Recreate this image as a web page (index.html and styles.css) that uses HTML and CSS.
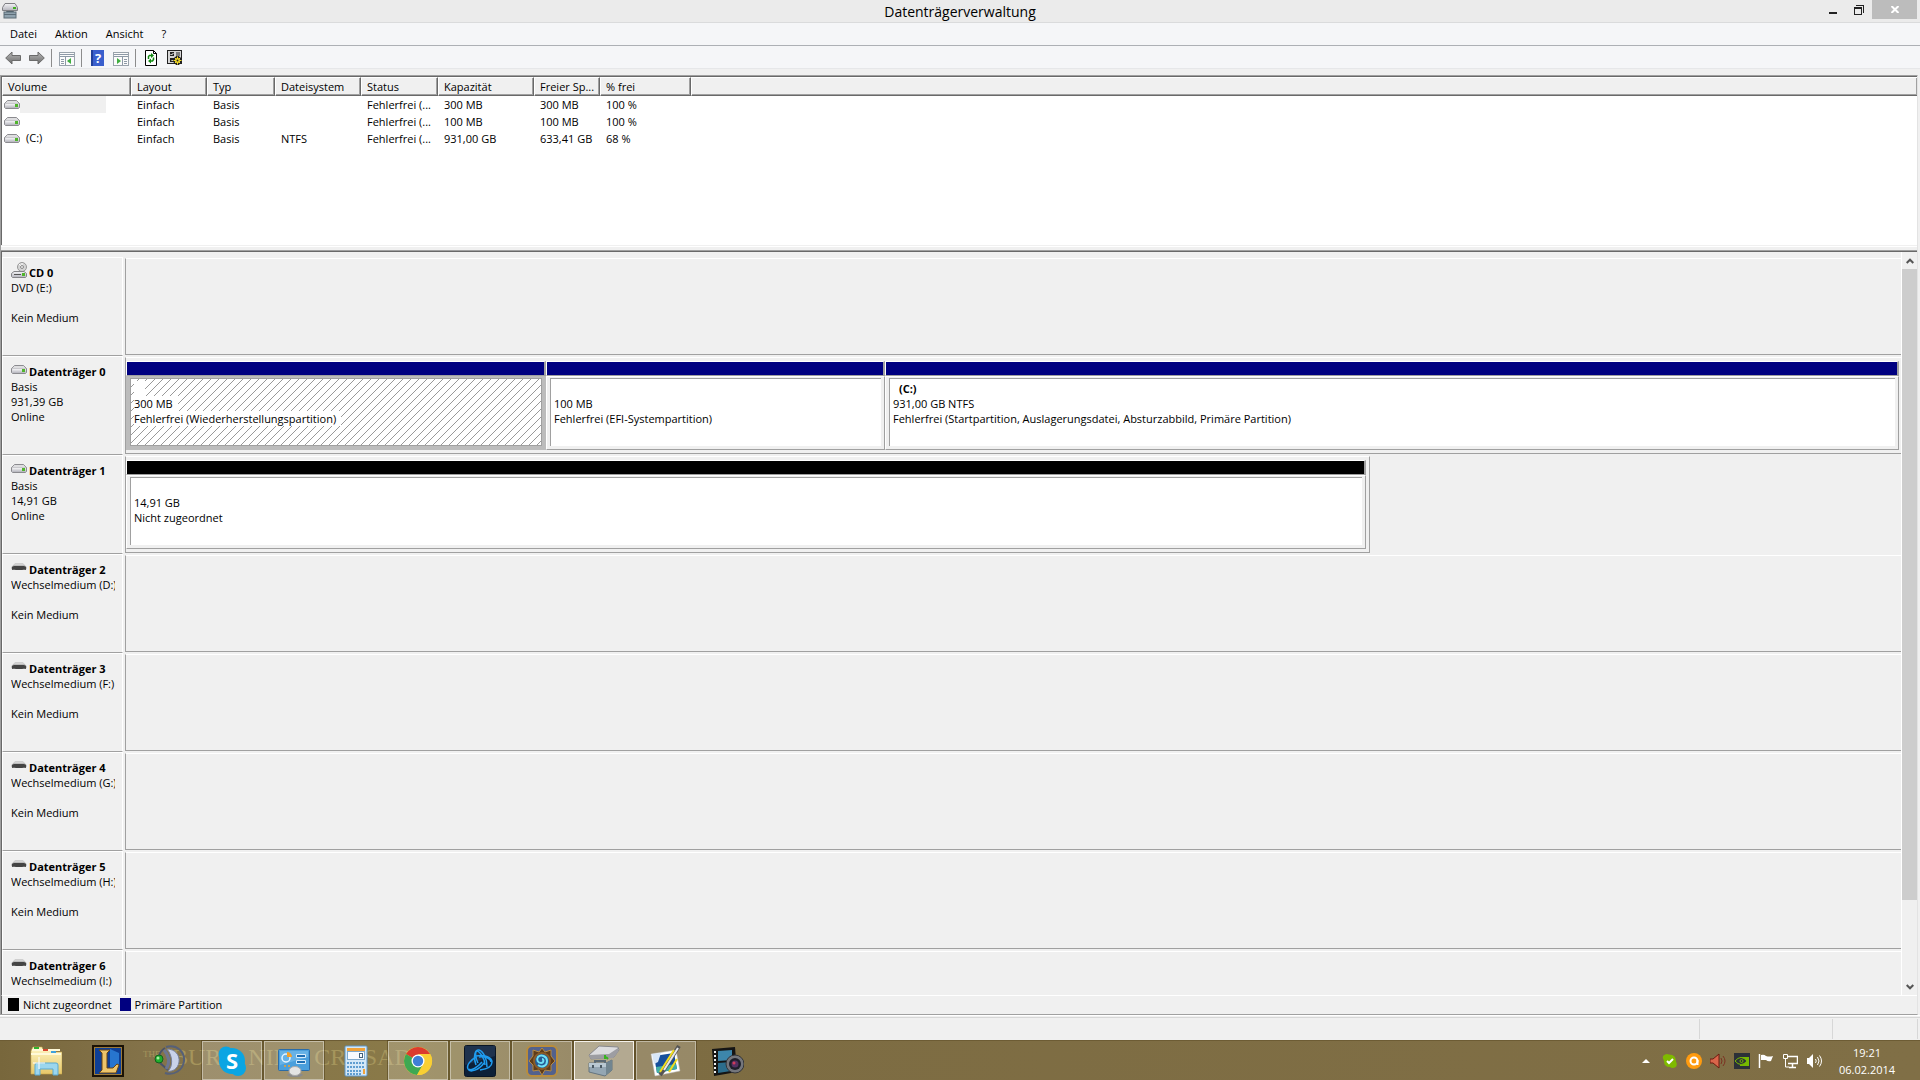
FILE: index.html
```html
<!DOCTYPE html>
<html lang="de">

<head>
    <meta charset="UTF-8">
    <meta name="viewport" content="width=device-width, initial-scale=1.0">
    <title>Datenträgerverwaltung</title>
    <link rel="stylesheet" href="styles.css">
</head>

<body>

    <!-- shared icons -->
    <svg class="defs" aria-hidden="true">
        <defs>
            <linearGradient id="metal" x1="0" y1="0" x2="0" y2="1">
                <stop offset="0" stop-color="#f4f4f6" />
                <stop offset="1" stop-color="#b4b4bc" />
            </linearGradient>
            <linearGradient id="arrow" x1="0" y1="0" x2="0" y2="1">
                <stop offset="0" stop-color="#b8b8b8" />
                <stop offset="1" stop-color="#6c6c6c" />
            </linearGradient>
            <linearGradient id="folder" x1="0" y1="0" x2="0" y2="1">
                <stop offset="0" stop-color="#fff6c4" />
                <stop offset="1" stop-color="#e6c768" />
            </linearGradient>
            <pattern id="hatch" width="8" height="8" patternUnits="userSpaceOnUse">
                <path d="M-1 9L9 -1M-1 1L1 -1M7 9L9 7" stroke="#999" stroke-width="1" fill="none" />
            </pattern>
        </defs>
        <symbol id="drive" viewBox="0 0 16 9">
            <path d="M3.500.5h9l3 3v4l-1 1h-13l-1-1v-4z" fill="#c9c9cd" stroke="#8b8b8f" />
            <path d="M3.500 1h9l2 2h-13z" fill="#dedee0" />
            <rect x="1" y="4" width="14" height="4" rx="1" fill="url(#metal)" />
            <rect x="11" y="4" width="3" height="3" fill="#4fb52c" />
        </symbol>
        <symbol id="stick" viewBox="0 0 16 9">
            <path d="M4 .5h8l3.500 3.500v2l-2 1h-11l-2-1V4z" fill="#a4a4a4" />
            <path d="M4 .5h8l2 2H2z" fill="#d4d4d4" />
            <path d="M1 4l2-1h10l2 1v3l-2-.5L11 7H5L3 6.500 1 7z" fill="#444" />
        </symbol>
        <symbol id="cd" viewBox="0 0 16 16">
            <circle cx="11" cy="5" r="4.500" fill="#d4d4d4" stroke="#979797" />
            <path d="M11 1v3M8 2l2 2" stroke="#fff" />
            <circle cx="11" cy="5" r="1.500" fill="#efefef" stroke="#8a8a8a" />
            <path d="M3 9.500h10l2.500 2v3l-1 1h-13l-1-1v-3z" fill="url(#metal)" stroke="#858588" />
            <path d="M3 12.500h7" stroke="#555" />
            <rect x="11" y="11" width="3" height="3" fill="#4fb52c" />
        </symbol>
        <symbol id="manager" viewBox="0 0 16 16">
            <path d="M3 .5h10l2.500 4v3h-15v-3z" fill="url(#metal)" stroke="#808084" />
            <rect x="11" y="4" width="3" height="2" fill="#3fae20" />
            <path d="M4.500 10V8.500h7V10" fill="none" stroke="#4b5a64" />
            <rect x="2" y="9" width="12" height="6" fill="#8fa2ae" stroke="#5c6c77" />
            <path d="M2 11.500h12" stroke="#5c6c77" />
        </symbol>
    </svg>

    <header class="titlebar">
        <svg class="ico16 app-icon"><use href="#manager" /></svg>
        <h1>Datenträgerverwaltung</h1>
        <div class="win-buttons">
            <button class="win-btn" aria-label="Minimieren">
                <svg width="8" height="11" viewBox="0 0 8 11"><path d="M0 8h8v2H0z" fill="#222" /></svg>
            </button>
            <button class="win-btn" aria-label="Verkleinern">
                <svg width="10" height="10" viewBox="0 0 10 10"><path d="M2 0h8v8H9V1H2zM0 2h8v8H0zM1 4v5h6V4z" fill="#222" fill-rule="evenodd" /></svg>
            </button>
            <button class="win-btn close" aria-label="Schließen">
                <svg width="8" height="7" viewBox="0 0 8 7"><path d="M.5 0l7 7M7.500 0l-7 7" stroke="#fff" stroke-width="2" /></svg>
            </button>
        </div>
    </header>

    <nav class="menubar">
        <button>Datei</button>
        <button>Aktion</button>
        <button>Ansicht</button>
        <button>?</button>
    </nav>

    <div class="toolbar">
        <button aria-label="Zurück">
            <svg class="ico16" viewBox="0 0 16 16"><path d="M.7 8L7 2v3.500h8.500v5H7V14z" fill="url(#arrow)" stroke="#6b6b6b" /></svg>
        </button>
        <button aria-label="Vorwärts">
            <svg class="ico16" viewBox="0 0 16 16"><path d="M15.300 8L9 2v3.500H.5v5H9V14z" fill="url(#arrow)" stroke="#6b6b6b" /></svg>
        </button>
        <span class="sep"></span>
        <button aria-label="Konsolenstruktur">
            <svg class="ico16" viewBox="0 0 16 16">
                <rect x=".5" y="2.500" width="15" height="13" fill="#fbfbfb" stroke="#9aa3ac" />
                <path d="M1 4.500h14M1 6.500h14" stroke="#8d99a6" />
                <path d="M6.500 7v8M2 9.500h3M2 11.500h3M2 13.500h3" stroke="#8d99a6" />
                <path d="M12 8v6l-4-3z" fill="#3fae3f" />
            </svg>
        </button>
        <span class="sep"></span>
        <button aria-label="Hilfe">
            <svg class="ico16" viewBox="0 0 16 16">
                <rect x="2" y="0" width="13" height="16" fill="#3a5fcd" />
                <path d="M2 0h2v16H2z" fill="#21409a" />
                <text x="6" y="13" class="help-mark">?</text>
            </svg>
        </button>
        <button aria-label="Aktionsbereich">
            <svg class="ico16" viewBox="0 0 16 16">
                <rect x=".5" y="2.500" width="15" height="13" fill="#fbfbfb" stroke="#9aa3ac" />
                <path d="M1 4.500h14M1 6.500h14" stroke="#8d99a6" />
                <path d="M9.500 7v8M11 9.500h3M11 11.500h3M11 13.500h3" stroke="#8d99a6" />
                <path d="M4 8v6l4-3z" fill="#3fae3f" />
            </svg>
        </button>
        <span class="sep"></span>
        <button aria-label="Aktualisieren">
            <svg class="ico16" viewBox="0 0 16 16">
                <path d="M2.500.5h8l3 3v12h-11z" fill="#fff" stroke="#000" />
                <path d="M10.500.5v3h3" fill="none" stroke="#000" />
                <path d="M5.500 9V6.500L6.500 5.500H8M10.500 7.500v2l-1 1.500H8" fill="none" stroke="#128a12" stroke-width="1.500" />
                <path d="M8 3l3 2.500L8 8zM8 8.500v5L5 11z" fill="#128a12" />
            </svg>
        </button>
        <button aria-label="Einstellungen">
            <svg class="ico16" viewBox="0 0 16 16">
                <rect x=".5" y=".5" width="14" height="13" fill="#d6d6d6" stroke="#222" />
                <path d="M3 2h4v4H3zM3 8h4v4H3z" fill="#222" />
                <path d="M3.500 4l1 1 2-2M4.500 10l1 1 2-2" stroke="#fff" fill="none" />
                <path d="M9 3h4M9 5h4" stroke="#222" />
                <path d="M10.500 6v9M6 10.500h9M7.500 7.500l6 6M13.500 7.500l-6 6" stroke="#222" stroke-width="3" />
                <path d="M10.500 6.500v8M6.500 10.500h8M8 8l5 5M13 8l-5 5" stroke="#f5dc28" stroke-width="1" />
                <circle cx="10.500" cy="10.500" r="2.500" fill="#f5dc28" />
                <circle cx="10.500" cy="10.500" r="1" fill="#222" />
            </svg>
        </button>
    </div>

    <main class="panes">
        <section class="volumes">
            <table>
                <thead>
                    <tr>
                        <th class="c-vol">Volume</th>
                        <th class="c-lay">Layout</th>
                        <th class="c-typ">Typ</th>
                        <th class="c-fs">Dateisystem</th>
                        <th class="c-stat">Status</th>
                        <th class="c-cap">Kapazität</th>
                        <th class="c-free">Freier Sp...</th>
                        <th class="c-pct">% frei</th>
                        <th class="c-rest"></th>
                    </tr>
                </thead>
                <tbody>
                    <tr>
                        <td class="vol selected"><svg class="ico-drive"><use href="#drive" /></svg><span></span></td>
                        <td>Einfach</td>
                        <td>Basis</td>
                        <td></td>
                        <td>Fehlerfrei (...</td>
                        <td>300 MB</td>
                        <td>300 MB</td>
                        <td>100 %</td>
                        <td></td>
                    </tr>
                    <tr>
                        <td class="vol"><svg class="ico-drive"><use href="#drive" /></svg><span></span></td>
                        <td>Einfach</td>
                        <td>Basis</td>
                        <td></td>
                        <td>Fehlerfrei (...</td>
                        <td>100 MB</td>
                        <td>100 MB</td>
                        <td>100 %</td>
                        <td></td>
                    </tr>
                    <tr>
                        <td class="vol"><svg class="ico-drive"><use href="#drive" /></svg><span>(C:)</span></td>
                        <td>Einfach</td>
                        <td>Basis</td>
                        <td>NTFS</td>
                        <td>Fehlerfrei (...</td>
                        <td>931,00 GB</td>
                        <td>633,41 GB</td>
                        <td>68 %</td>
                        <td></td>
                    </tr>
                </tbody>
            </table>
        </section>

        <div class="splitter"></div>

        <section class="graph">
            <div class="disks">
                <div class="disk">
                    <div class="disk-label">
                        <h2><svg class="ico-cd"><use href="#cd" /></svg>CD 0</h2>
                        <p>DVD (E:)</p>
                        <p></p>
                        <p>Kein Medium</p>
                    </div>
                    <div class="disk-map"></div>
                </div>

                <div class="disk">
                    <div class="disk-label">
                        <h2><svg class="ico-drive"><use href="#drive" /></svg>Datenträger 0</h2>
                        <p>Basis</p>
                        <p>931,39 GB</p>
                        <p>Online</p>
                    </div>
                    <div class="disk-map">
                        <div class="part p-recovery selected">
                            <div class="stripe primary"></div>
                            <div class="part-body">
                                <div class="part-box">
                                    <svg class="hatching"><rect width="100%" height="100%" fill="url(#hatch)" /></svg>
                                    <p><b></b></p>
                                    <p><span>300 MB</span></p>
                                    <p><span>Fehlerfrei (Wiederherstellungspartition)</span></p>
                                </div>
                            </div>
                        </div>
                        <div class="part p-efi">
                            <div class="stripe primary"></div>
                            <div class="part-body">
                                <div class="part-box">
                                    <p></p>
                                    <p>100 MB</p>
                                    <p>Fehlerfrei (EFI-Systempartition)</p>
                                </div>
                            </div>
                        </div>
                        <div class="part p-system">
                            <div class="stripe primary"></div>
                            <div class="part-body">
                                <div class="part-box">
                                    <p><b>(C:)</b></p>
                                    <p>931,00 GB NTFS</p>
                                    <p>Fehlerfrei (Startpartition, Auslagerungsdatei, Absturzabbild, Primäre Partition)</p>
                                </div>
                            </div>
                        </div>
                    </div>
                </div>

                <div class="disk">
                    <div class="disk-label">
                        <h2><svg class="ico-drive"><use href="#drive" /></svg>Datenträger 1</h2>
                        <p>Basis</p>
                        <p>14,91 GB</p>
                        <p>Online</p>
                    </div>
                    <div class="disk-area">
                        <div class="disk-map small">
                            <div class="part p-system">
                                <div class="stripe unallocated"></div>
                                <div class="part-body">
                                    <div class="part-box">
                                        <p></p>
                                        <p>14,91 GB</p>
                                        <p>Nicht zugeordnet</p>
                                    </div>
                                </div>
                            </div>
                        </div>
                    </div>
                </div>

                <div class="disk">
                    <div class="disk-label">
                        <h2><svg class="ico-drive"><use href="#stick" /></svg>Datenträger 2</h2>
                        <p>Wechselmedium (D:)</p>
                        <p></p>
                        <p>Kein Medium</p>
                    </div>
                    <div class="disk-map"></div>
                </div>

                <div class="disk">
                    <div class="disk-label">
                        <h2><svg class="ico-drive"><use href="#stick" /></svg>Datenträger 3</h2>
                        <p>Wechselmedium (F:)</p>
                        <p></p>
                        <p>Kein Medium</p>
                    </div>
                    <div class="disk-map"></div>
                </div>

                <div class="disk">
                    <div class="disk-label">
                        <h2><svg class="ico-drive"><use href="#stick" /></svg>Datenträger 4</h2>
                        <p>Wechselmedium (G:)</p>
                        <p></p>
                        <p>Kein Medium</p>
                    </div>
                    <div class="disk-map"></div>
                </div>

                <div class="disk">
                    <div class="disk-label">
                        <h2><svg class="ico-drive"><use href="#stick" /></svg>Datenträger 5</h2>
                        <p>Wechselmedium (H:)</p>
                        <p></p>
                        <p>Kein Medium</p>
                    </div>
                    <div class="disk-map"></div>
                </div>

                <div class="disk">
                    <div class="disk-label">
                        <h2><svg class="ico-drive"><use href="#stick" /></svg>Datenträger 6</h2>
                        <p>Wechselmedium (I:)</p>
                    </div>
                    <div class="disk-map"></div>
                </div>
            </div>

            <div class="scrollbar">
                <button aria-label="Nach oben">
                    <svg width="8" height="6" viewBox="0 0 8 6"><path d="M.7 5L4 1.700 7.300 5" fill="none" stroke="#555" stroke-width="2" /></svg>
                </button>
                <div class="track"><div class="thumb"></div></div>
                <button aria-label="Nach unten">
                    <svg width="8" height="6" viewBox="0 0 8 6"><path d="M.7 1L4 4.300 7.300 1" fill="none" stroke="#555" stroke-width="2" /></svg>
                </button>
            </div>
        </section>

        <div class="legend">
            <i class="unallocated"></i><span>Nicht zugeordnet</span>
            <i class="primary"></i><span>Primäre Partition</span>
        </div>
    </main>

    <div class="statusbar">
        <span class="s-main"></span>
        <span class="s-mid"></span>
        <span class="s-end"></span>
    </div>

    <footer class="taskbar">
        <div class="wallpaper" aria-hidden="true">
            <small>THE</small>
            <span>BUR</span>
            <span>NING CRUSADE</span>
        </div>

        <div class="tasks">
            <button class="task" aria-label="Explorer">
                <svg viewBox="0 0 32 32">
                    <path d="M2 4l1-2h9l1 3h8l1 2h10v22H1V6z" fill="url(#folder)" stroke="#c9a94c" stroke-width=".6" />
                    <path d="M2 5h28M1 9h30" stroke="#fff9d8" stroke-width="2" />
                    <rect x="4" y="2" width="5" height="2" fill="#2fb32f" />
                    <rect x="13" y="4" width="5" height="2" fill="#d8472f" />
                    <rect x="21" y="6" width="5" height="2" fill="#3fa2dd" />
                    <path d="M5 30V20q0-2 2-2h19q2 0 2 2v10h-5v-6H10v6z" fill="#9bd6ee" stroke="#5aa9cf" />
                    <path d="M9 12v12M3 18h12" stroke="#fff" />
                </svg>
            </button>
            <button class="task" aria-label="League of Legends">
                <svg viewBox="0 0 32 32">
                    <rect x="1" y="1" width="30" height="30" fill="#0e3f96" stroke="#1a1206" stroke-width="2" />
                    <rect x="2.500" y="2.500" width="27" height="27" fill="none" stroke="#9b7a3a" />
                    <path d="M18 4l9 4v14l-9 2z" fill="#2775cf" />
                    <path d="M7 5h11l-3 3v15h6l4-4 2 1-3 8H7l3-3V8z" fill="#ecc46b" stroke="#6b4510" />
                </svg>
            </button>
            <button class="task" aria-label="TeamSpeak">
                <svg viewBox="0 0 32 32">
                    <path d="M12 2c11-3 19 5 18 14S20 31 11 28" fill="none" stroke="#566078" stroke-width="2" />
                    <path d="M13 4c8 0 13 6 12 13s-7 10-11 9c5-4 5-15-1-22z" fill="#c9d2ea" stroke="#77809c" />
                    <path d="M11 3C6 6 5 9 5 13M6 18l8 7" fill="none" stroke="#4b5368" stroke-width="2" />
                    <path d="M10 5c5 6 6 13 2 19" fill="none" stroke="#6d7690" stroke-width="3" />
                    <circle cx="5" cy="14" r="4" fill="#1fae2c" stroke="#14601c" />
                    <circle cx="4" cy="13" r="1.500" fill="#a4f0a0" />
                </svg>
            </button>
            <button class="task open" aria-label="Skype">
                <svg viewBox="0 0 32 32">
                    <circle cx="16" cy="16" r="13" fill="#0aa5e3" />
                    <circle cx="10" cy="9" r="7.500" fill="#0aa5e3" />
                    <circle cx="22" cy="23" r="8" fill="#0aa5e3" />
                    <text x="16" y="24" class="skype-mark">S</text>
                </svg>
            </button>
            <button class="task open" aria-label="Systemsteuerung">
                <svg viewBox="0 0 32 32">
                    <rect x=".5" y="4.500" width="31" height="21" rx="1" fill="#4a9fdc" stroke="#2a6ca8" />
                    <path d="M2 6h28v6L2 20z" fill="#7bc0ec" opacity=".6" />
                    <circle cx="8" cy="13" r="4" fill="none" stroke="#e6f4ff" stroke-width="1.500" />
                    <path d="M9 12V7a5 5 0 0 1 5 5z" fill="#f3a12c" />
                    <path d="M18.500 9.500h9v3h-9zM18.500 15.500h9v3h-9z" fill="#1d6fb5" stroke="#d6ecfb" />
                    <circle cx="7" cy="21" r="1" fill="#f3a12c" />
                    <circle cx="11" cy="21" r="1" fill="#f3a12c" />
                    <ellipse cx="17" cy="30" rx="8" ry="2" fill="#8b8b8b" />
                    <ellipse cx="17" cy="26" rx="6" ry="4.500" fill="#e4e4e4" stroke="#a9a9a9" />
                </svg>
            </button>
            <button class="task" aria-label="Rechner">
                <svg viewBox="0 0 32 32">
                    <rect x="5" y="1" width="22" height="30" rx="1" fill="#d3e7f7" stroke="#5c97c9" />
                    <rect x="7" y="3" width="18" height="3" fill="#f0a23a" />
                    <rect x="7.500" y="6.500" width="17" height="8" fill="#f7fbff" stroke="#7fa9cc" />
                    <rect x="19.500" y="8.500" width="3" height="4" fill="none" stroke="#44617a" />
                    <path d="M7 18h17M7 22h17M7 26h14M7 29h14" stroke="#5f9dd0" stroke-width="2" stroke-dasharray="2 1" />
                    <rect x="23" y="24" width="2" height="5" fill="#f0a23a" />
                </svg>
            </button>
            <button class="task open" aria-label="Chrome">
                <svg viewBox="0 0 32 32">
                    <circle cx="16" cy="16" r="14" fill="#f9cf33" />
                    <path d="M16 16L3.900 9A14 14 0 0 1 28.100 9z" fill="#db3b2e" />
                    <path d="M16 16L3.900 9A14 14 0 0 0 15 30l6-11z" fill="#3ea852" />
                    <path d="M16 9h12.100A14 14 0 0 1 15 30l7-11z" fill="#f9cf33" />
                    <circle cx="16" cy="16" r="6.500" fill="#fff" />
                    <circle cx="16" cy="16" r="5.200" fill="#3f7fd6" />
                </svg>
            </button>
            <button class="task open" aria-label="Battle.net">
                <svg viewBox="0 0 32 32">
                    <rect x=".5" y=".5" width="31" height="31" rx="2" fill="#0d2038" stroke="#0a1524" />
                    <path d="M1 1h30v10L1 20z" fill="#2b3f5c" opacity=".6" />
                    <g fill="none" stroke="#1f9cf0" stroke-width="1.500">
                        <path d="M12 20C9 12 11 4 15 5s8 8 8 17" />
                        <path d="M14 18C11 12 11 6 13 6s8 7 8 14" />
                        <path d="M12 11c9-2 16 2 16 6s-5 7-12 8" />
                        <path d="M15 12c7-1 12 2 12 5" />
                        <path d="M20 18C15 25 6 28 4 24s3-9 8-12" />
                        <path d="M18 17C13 23 7 26 5 24" />
                    </g>
                </svg>
            </button>
            <button class="task open" aria-label="Hearthstone">
                <svg viewBox="0 0 32 32">
                    <rect x="1" y="1" width="30" height="30" rx="5" fill="#53618c" stroke="#b98d3c" stroke-width="2" />
                    <path d="M16 3l3 4 6-2v6l4 5-4 4v6l-6-1-3 5-3-5-6 1v-6l-4-4 4-5V5l6 2z" fill="#5f3c1a" stroke="#b58a42" />
                    <circle cx="16" cy="16" r="8" fill="#275b94" stroke="#8a5c28" stroke-width="2" />
                    <path d="M12 20c4 3 9 1 9-4s-6-7-9-4c-2 3 0 6 3 6s3-4 1-4" fill="none" stroke="#6fe0f5" stroke-width="2" />
                </svg>
            </button>
            <button class="task open active" aria-label="Datenträgerverwaltung">
                <svg viewBox="0 0 32 32">
                    <path d="M11 1l19 1 1 3-5 7-23 2-2-4z" fill="#dcdcdf" stroke="#88888c" />
                    <path d="M1 10l20-1 9-6v4l-5 6-22 1z" fill="#9d9da2" />
                    <path d="M17 10v4M18 12l2 2" stroke="#37b41e" stroke-width="2" />
                    <path d="M7 19v-3h10v3" fill="none" stroke="#5c6a74" stroke-width="2" />
                    <path d="M1 18h17l6-3v10l-7 6-16-4z" fill="#94a6b3" stroke="#64747f" />
                    <path d="M1 18h17v4H1z" fill="#b9c8d2" />
                    <path d="M18 18l6-3v10l-6 5z" fill="#718590" />
                    <path d="M5 20v3M13 20v3" stroke="#4a5963" stroke-width="2" />
                </svg>
            </button>
            <button class="task open" aria-label="Bildbearbeitung">
                <svg viewBox="0 0 32 32">
                    <path d="M1 9l25-4 4 21-25 5z" fill="#fff" stroke="#bbb" stroke-width=".5" />
                    <path d="M4 11l20-3 3 16-20 4z" fill="#164f9c" />
                    <path d="M6 22l20-3 1 5-20 4z" fill="#42b0a4" />
                    <path d="M2 9l9-1-3 9-4 2z" fill="#d8e6f6" />
                    <path d="M29 1L13 26l-3 4" stroke="#555" stroke-width="4" />
                    <path d="M28 3L14 25" stroke="#e8e8e8" stroke-width="2" />
                    <path d="M24 5L10 27M27 14l-8 13" stroke="#f2dc1e" stroke-width="2" />
                </svg>
            </button>
            <button class="task" aria-label="Videoaufnahme">
                <svg viewBox="0 0 32 32">
                    <path d="M0 4l23-2 2 25-23 4z" fill="#151515" />
                    <path d="M6 6l14-1v10L6 16z" fill="#3d86ab" />
                    <path d="M6 18l13-1v9L6 28z" fill="#2c6d8c" />
                    <path d="M3 6v23" stroke="#eee" stroke-width="2" stroke-dasharray="2 2" />
                    <circle cx="23" cy="19" r="9" fill="#74767c" stroke="#33353a" />
                    <circle cx="23" cy="19" r="6" fill="#1d1f2a" />
                    <circle cx="23" cy="19" r="3.500" fill="#533060" />
                    <circle cx="22" cy="18" r="1.500" fill="#d23a5a" />
                </svg>
            </button>
        </div>

        <div class="tray">
            <svg viewBox="0 0 16 16"><path d="M4 10l4-4 4 4z" fill="#fff" /></svg>
            <svg viewBox="0 0 16 16">
                <path d="M1 3q3-3 6-1.500 7 0 7 7 2 4-1 6-3 1-5-.5Q2 14 2 8 0 5 1 3z" fill="#7fba00" />
                <path d="M5 8l2 2 4-4" fill="none" stroke="#fff" stroke-width="2" />
            </svg>
            <svg viewBox="0 0 16 16">
                <circle cx="8" cy="8" r="8" fill="#ff9b0f" />
                <circle cx="8" cy="8" r="3.500" fill="none" stroke="#fff" stroke-width="2" />
                <path d="M11.500 7v5" stroke="#fff" stroke-width="2" />
            </svg>
            <svg viewBox="0 0 16 16">
                <path d="M0 6h3l6-5v14l-6-5H0z" fill="#d9654a" stroke="#6b1d10" />
                <path d="M11 5q2 3 0 6M13 3q4 5 0 10" fill="none" stroke="#7d3020" />
            </svg>
            <svg viewBox="0 0 16 16">
                <rect width="16" height="16" fill="#2c3138" />
                <path d="M6 4h9v9H6z" fill="#76b900" />
                <path d="M1 8q6-7 12 0-6 7-12 0z" fill="#2c3138" stroke="#76b900" />
                <circle cx="7.500" cy="8" r="1.500" fill="none" stroke="#76b900" />
            </svg>
            <svg viewBox="0 0 16 16">
                <path d="M1.500 1v14" stroke="#fff" stroke-width="1.500" />
                <path d="M3 2q3-1 5 1 3 1 7 0l-2 5q-3 1-5-1H3z" fill="#fff" />
            </svg>
            <svg viewBox="0 0 16 16">
                <path d="M6 3.500h9.500v7H6M10.500 11v3M7 14.500h7" fill="none" stroke="#fff" stroke-width="1.500" />
                <path d="M1.500 1.500h4v4h-4zM3.500 6v8H7" fill="none" stroke="#fff" />
            </svg>
            <svg viewBox="0 0 16 16">
                <path d="M1 5h2l4-4v14l-4-4H1z" fill="#fff" />
                <path d="M9.500 6q1.500 2 0 4M11.500 4q3 4 0 8M13.500 2.500q4 5.500 0 11" fill="none" stroke="#fff" />
            </svg>
        </div>

        <div class="clock">
            <span>19:21</span>
            <span>06.02.2014</span>
        </div>
    </footer>

</body>

</html>
```

FILE: styles.css
```css
* {
    box-sizing: border-box;
}

body {
    margin: 0;
    height: 100vh;
    display: flex;
    flex-direction: column;
    overflow: hidden;
    background: #f0f0f0;
    color: #000;
    font-family: "Open Sans", "Noto Sans", sans-serif;
    font-size: 11px;
    line-height: 15px;
}

h1,
h2,
p {
    margin: 0;
    font-size: 11px;
}

button {
    margin: 0;
    padding: 0;
    border: 0;
    background: none;
    color: inherit;
    font: inherit;
}

.defs {
    position: absolute;
    width: 0;
    height: 0;
}

.ico16 {
    width: 16px;
    height: 16px;
}

.ico-drive {
    width: 16px;
    height: 9px;
}

.ico-cd {
    width: 16px;
    height: 16px;
}

.primary {
    background: #000080;
}

.unallocated {
    background: #000;
}


/* title bar */

.titlebar {
    display: grid;
    grid-template-columns: 1fr auto 1fr;
    height: 23px;
    flex: none;
    background: #ebebeb;
    border-bottom: 1px solid #dadbdc;
}

.titlebar h1 {
    font-size: 14px;
    font-weight: normal;
    line-height: 23px;
}

.app-icon {
    margin: 3px 2px;
}

.win-buttons {
    display: flex;
    justify-content: flex-end;
    align-items: flex-start;
    padding-right: 3px;
}

.win-btn {
    width: 26px;
    height: 19px;
    display: flex;
    align-items: center;
    justify-content: center;
}

.win-btn.close {
    width: 45px;
    background: #bcbcbc;
}


/* menu and tools */

.menubar {
    display: flex;
    flex: none;
    height: 23px;
    padding: 0 0 2px 1px;
    background: #f5f6f8;
    border-bottom: 1px solid #adb0b5;
}

.menubar button {
    padding: 0 9px;
}

.toolbar {
    display: flex;
    flex: none;
    align-items: center;
    height: 23px;
    padding: 2px 0 0 1px;
    background: #f5f6f8;
    border-bottom: 1px solid #e6e7e9;
}

.toolbar button {
    width: 24px;
    height: 20px;
    display: flex;
    align-items: center;
    justify-content: center;
}

.sep {
    width: 1px;
    height: 18px;
    margin: 0 3px 0 2px;
    background: #8c8c8c;
}

.help-mark {
    font-size: 13px;
    font-weight: bold;
    fill: #fff;
}


/* volume list */

.panes {
    flex: 1;
    min-height: 0;
    display: flex;
    flex-direction: column;
    margin: 6px 2px 0 0;
    border: 1px solid #a0a0a0;
    border-right-color: #e3e3e3;
}

.volumes {
    flex: none;
    height: 169px;
    background: #fff;
    border-top: 1px solid #696969;
    border-left: 1px solid #696969;
}

.volumes table {
    width: 100%;
    table-layout: fixed;
    border-collapse: separate;
    border-spacing: 0;
}

.volumes th {
    height: 19px;
    padding: 0 0 0 5px;
    text-align: left;
    font-weight: normal;
    white-space: nowrap;
    background: #f0f0f0;
    border-top: 1px solid #fff;
    border-left: 1px solid #fff;
    border-right: 1px solid #696969;
    border-bottom: 1px solid #696969;
    box-shadow: inset -1px -1px #a0a0a0;
}

.volumes th:last-child {
    border-right: 0;
}

.volumes td {
    height: 17px;
    padding: 0 0 0 6px;
    white-space: nowrap;
}

.volumes .c-vol { width: 129px; }
.volumes .c-lay { width: 76px; }
.volumes .c-typ { width: 68px; }
.volumes .c-fs { width: 86px; }
.volumes .c-stat { width: 77px; }
.volumes .c-cap { width: 96px; }
.volumes .c-free { width: 66px; }
.volumes .c-pct { width: 91px; }

.volumes .vol {
    display: flex;
    align-items: center;
    padding-left: 2px;
}

.vol span {
    width: 86px;
    height: 17px;
    padding-left: 6px;
}

.vol.selected span {
    background: #f0f0f0;
}

.splitter {
    flex: none;
    height: 6px;
    margin-top: 1px;
    border-top: 1px solid #fff;
    border-bottom: 1px solid #696969;
    box-shadow: inset 0 -1px #a0a0a0;
}


/* disk graph */

.graph {
    flex: 1;
    min-height: 0;
    display: flex;
    border-left: 1px solid #696969;
}

.disks {
    flex: 1;
    min-width: 0;
    padding-top: 5px;
    overflow: hidden;
}

.disk {
    display: flex;
    height: 99px;
}

.disk-label {
    flex: none;
    width: 121px;
    padding: 7px 7px 0 8px;
    border: 1px solid #fff;
    border-bottom-color: #a0a0a0;
}

.disk-label h2 {
    display: flex;
    gap: 2px;
    height: 15px;
    white-space: nowrap;
}

.disk-label p {
    height: 15px;
    overflow: hidden;
    white-space: nowrap;
}

.disk-label svg {
    flex: none;
    margin-top: 1px;
}

.disk-label .ico-cd {
    margin-top: -3px;
}

.disk-area {
    flex: 1;
    display: flex;
}

.disk-map {
    flex: 1;
    display: flex;
    height: 97px;
    margin: 1px 0 1px 2px;
    padding: 3px 2px 3px 0;
    border: 1px solid #fff;
    border-left-color: #a0a0a0;
    border-bottom-color: #a0a0a0;
    border-right: 0;
}

.disk-map.small {
    flex: 0 0 70%;
    padding-right: 3px;
    border-right: 1px solid #a0a0a0;
}

.part {
    display: flex;
    flex-direction: column;
    min-width: 0;
}

.p-recovery { flex: 420 1 0; }
.p-efi { flex: 339 1 0; }
.p-system { flex: 1014 1 0; }

.stripe {
    flex: none;
    height: 15px;
    border: 1px solid #fff;
    border-right: 2px solid #a0a0a0;
    border-bottom-color: #a0a0a0;
}

.part-body {
    flex: 1;
    display: flex;
    padding: 1px 3px 3px;
    border: 1px solid #fff;
    border-right-color: #a0a0a0;
    border-bottom-color: #a0a0a0;
}

.part-box {
    position: relative;
    flex: 1;
    padding: 2px 3px;
    background: #fff;
    border-top: 1px solid #a0a0a0;
    border-left: 1px solid #a0a0a0;
}

.part-box p {
    position: relative;
    height: 15px;
    white-space: nowrap;
}

.part-box b {
    padding-left: 6px;
}

.selected .part-body {
    background: #bcbcbc;
    border-color: #bcbcbc;
}

.selected .part-box {
    border: 1px solid #a0a0a0;
}

.selected .part-box span,
.selected .part-box b {
    display: inline-block;
    height: 15px;
    padding-right: 5px;
    background: #fff;
}

.hatching {
    position: absolute;
    inset: 0;
    width: 100%;
    height: 100%;
}


/* scrollbar */

.scrollbar {
    flex: none;
    width: 16px;
    display: flex;
    flex-direction: column;
    border-left: 1px solid #fff;
}

.scrollbar button {
    height: 17px;
    display: flex;
    align-items: center;
    justify-content: center;
}

.track {
    flex: 1;
}

.thumb {
    height: 89%;
    background: #cdcdcd;
}


.legend {
    flex: none;
    display: flex;
    align-items: center;
    height: 19px;
    padding: 0 0 2px 6px;
    border-top: 1px solid #fff;
    border-left: 1px solid #696969;
}

.legend i {
    width: 11px;
    height: 13px;
    margin-right: 4px;
}

.legend span {
    margin-right: 8px;
}

.statusbar {
    flex: none;
    display: flex;
    height: 25px;
    padding: 3px 2px 1px 0;
    border-top: 1px solid #fff;
    box-shadow: inset 0 1px #f0f0f0, inset 0 2px #d7d7d7;
}

.statusbar span {
    border-right: 1px solid #d7d7d7;
}

.s-main { flex: 1; }
.s-mid { width: 133px; }
.s-end { width: 85px; }


/* taskbar */

.taskbar {
    position: relative;
    flex: none;
    display: flex;
    align-items: center;
    height: 40px;
    background: linear-gradient(90deg, #78673c 0, #84734a 8%, #8a7a48 22%, #7d6c42 32%, #806f46 100%);
    border-top: 1px solid #6d5c34;
    color: #fff;
}

.wallpaper {
    position: absolute;
    left: 143px;
    top: 0;
    display: flex;
    gap: 27px;
    color: #a5955c;
    font-family: "Liberation Serif", serif;
    font-size: 24px;
    line-height: 32px;
    white-space: nowrap;
}

.wallpaper small {
    width: 29px;
    margin-right: -27px;
    font-size: 9px;
    line-height: 26px;
}

.tasks {
    position: relative;
    flex: 1;
    display: flex;
    gap: 2px;
    padding-left: 16px;
}

.task {
    width: 60px;
    height: 39px;
    display: flex;
    align-items: center;
    justify-content: center;
    border: 1px solid transparent;
}

.task svg {
    width: 32px;
    height: 32px;
}

.task.open {
    background: rgba(255, 255, 255, .2);
    border-color: rgba(255, 255, 255, .4);
    outline: 1px solid rgba(60, 45, 10, .4);
}

.task.active {
    background: rgba(255, 255, 255, .42);
    border-color: #f4f1ea;
}

.skype-mark {
    font-size: 22px;
    font-weight: bold;
    text-anchor: middle;
    fill: #fff;
}

.tray {
    display: flex;
    gap: 8px;
}

.tray svg {
    width: 16px;
    height: 16px;
}

.clock {
    display: flex;
    flex-direction: column;
    width: 90px;
    margin-right: 8px;
    text-align: center;
    line-height: 17px;
}
```
